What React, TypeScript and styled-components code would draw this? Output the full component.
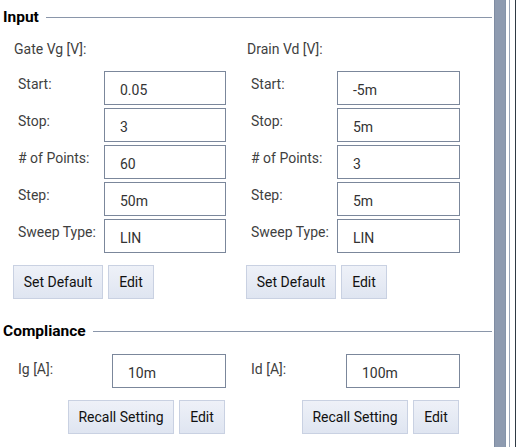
import React from "react";
import styled, { createGlobalStyle } from "styled-components";

const Global = createGlobalStyle`
  html, body { margin: 0; padding: 0; background: #ffffff; }
  body { font-family: Roboto, "Liberation Sans", Arial, sans-serif; font-size: 14px; color: #3a3a3a; }
`;

const Window = styled.div`
  display: flex;
  width: 516px;
  height: 447px;
  overflow: hidden;
  background: #ffffff;
`;

const Main = styled.div`
  width: 494px;
  flex: none;
  display: flex;
  flex-direction: column;
`;

const ScrollArea = styled.div`
  flex: none;
  width: 22px;
  display: flex;
`;

const ScrollThumb = styled.div`
  width: 10px;
  background: #8e9bb0;
  border-left: 1px solid #7f8ca2;
  border-right: 1px solid #8594a9;
`;

const ScrollGap = styled.div<{ $w: number }>`
  width: ${(p) => p.$w}px;
  background: #ffffff;
`;

const ScrollLine = styled.div<{ $c: string }>`
  width: 1px;
  background: ${(p) => p.$c};
`;

const SectionHeader = styled.div<{ $top: number }>`
  display: flex;
  align-items: center;
  gap: 7px;
  height: 20px;
  margin-top: ${(p) => p.$top}px;
  padding-left: 3px;
  padding-right: 2px;
`;

const SectionTitle = styled.span`
  font-weight: 700;
  font-size: 15.5px;
  color: #000000;
  line-height: 20px;
`;

const Rule = styled.div`
  flex: 1;
  height: 1px;
  background: #8a96aa;
  margin-top: 1px;
`;

const Columns = styled.div<{ $top: number }>`
  display: grid;
  grid-template-columns: 212px 213px;
  column-gap: 21px;
  padding-left: 14px;
  margin-top: ${(p) => p.$top}px;
`;

const Column = styled.div`
  display: flex;
  flex-direction: column;
`;

const GroupTitle = styled.div`
  line-height: 20px;
  height: 20px;
  color: #3f3f3f;
  margin-bottom: 12px;
`;

const FieldGrid = styled.div<{ $labelW: number }>`
  display: grid;
  grid-template-columns: ${(p) => p.$labelW}px 1fr;
  row-gap: 3px;
`;

const Label = styled.div<{ $pt: number }>`
  padding-left: 4px;
  padding-top: ${(p) => p.$pt}px;
  line-height: 20px;
  color: #3f3f3f;
  white-space: nowrap;
`;

const Field = styled.div<{ $pl: number }>`
  box-sizing: border-box;
  height: 34px;
  border: 1px solid #7b879b;
  background: #ffffff;
  padding-left: ${(p) => p.$pl}px;
  padding-top: 8px;
  line-height: 20px;
  color: #333333;
`;

const ButtonRow = styled.div<{ $align: "start" | "end"; $shift: number }>`
  display: flex;
  justify-content: ${(p) => (p.$align === "end" ? "flex-end" : "flex-start")};
  gap: 5px;
  margin-top: 12px;
  margin-left: ${(p) => p.$shift}px;
  margin-right: ${(p) => (p.$align === "end" ? 1 : 0)}px;
`;

const Button = styled.button<{ $w: number }>`
  box-sizing: border-box;
  width: ${(p) => p.$w}px;
  height: 34px;
  padding: 0;
  border: 1px solid #c9d1e2;
  background: linear-gradient(#eef1f8, #dfe5f1);
  font-family: Roboto, "Liberation Sans", Arial, sans-serif;
  font-size: 14px;
  color: #111111;
  cursor: pointer;
`;

const CompRow = styled.div`
  display: flex;
  justify-content: space-between;
`;

const CompField = styled(Field)`
  width: 114px;
`;

type Sweep = { title: string; values: string[] };

const sweepLabels = ["Start:", "Stop:", "# of Points:", "Step:", "Sweep Type:"];

const sweeps: Sweep[] = [
  { title: "Gate Vg [V]:", values: ["0.05", "3", "60", "50m", "LIN"] },
  { title: "Drain Vd [V]:", values: ["-5m", "5m", "3", "5m", "LIN"] },
];

const compliance = [
  { label: "Ig [A]:", value: "10m" },
  { label: "Id [A]:", value: "100m" },
];

export default function App() {
  return (
    <Window>
      <Global />
      <Main>
        <SectionHeader $top={7}>
          <SectionTitle>Input</SectionTitle>
          <Rule />
        </SectionHeader>
        <Columns $top={12}>
          {sweeps.map((s) => (
            <Column key={s.title}>
              <GroupTitle>{s.title}</GroupTitle>
              <FieldGrid $labelW={90}>
                {sweepLabels.map((l, i) => (
                  <React.Fragment key={l}>
                    <Label $pt={3}>{l}</Label>
                    <Field $pl={15}>{s.values[i]}</Field>
                  </React.Fragment>
                ))}
              </FieldGrid>
              <ButtonRow $align="start" $shift={-1}>
                <Button $w={90}>Set Default</Button>
                <Button $w={46}>Edit</Button>
              </ButtonRow>
            </Column>
          ))}
        </Columns>
        <SectionHeader $top={22}>
          <SectionTitle>Compliance</SectionTitle>
          <Rule />
        </SectionHeader>
        <Columns $top={13}>
          {compliance.map((c) => (
            <Column key={c.label}>
              <CompRow>
                <Label $pt={5}>{c.label}</Label>
                <CompField $pl={15}>{c.value}</CompField>
              </CompRow>
              <ButtonRow $align="end" $shift={0}>
                <Button $w={106}>Recall Setting</Button>
                <Button $w={46}>Edit</Button>
              </ButtonRow>
            </Column>
          ))}
        </Columns>
      </Main>
      <ScrollArea>
        <ScrollThumb />
        <ScrollGap $w={3} />
        <ScrollLine $c="#9aa5b6" />
        <ScrollGap $w={5} />
        <ScrollLine $c="#2f3a44" />
      </ScrollArea>
    </Window>
  );
}
